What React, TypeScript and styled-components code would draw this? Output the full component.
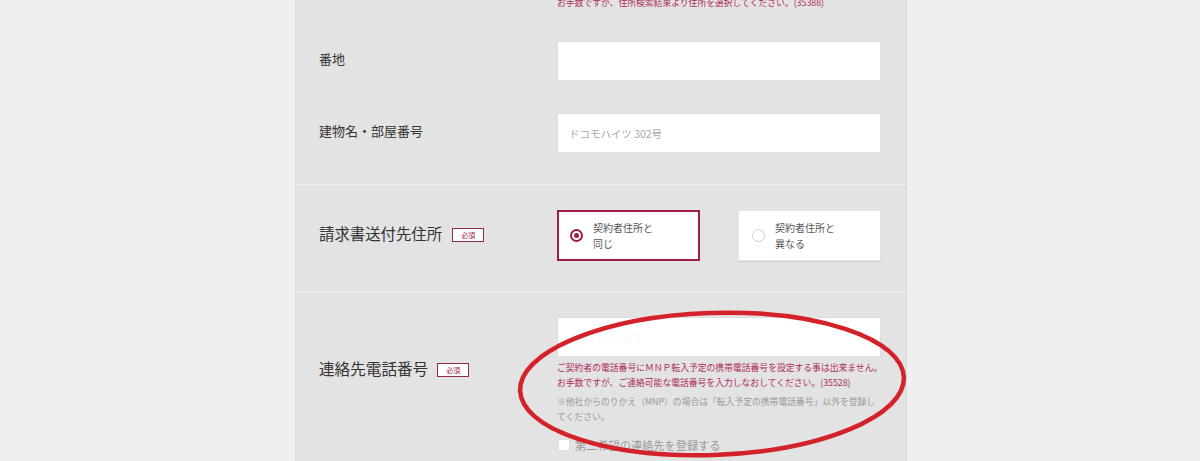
import * as React from "react";
import styled, { createGlobalStyle } from "styled-components";

const maroon = "#9e1c48";
const errorRed = "#ad2c58";
const fontStack = `"Noto Sans CJK JP", "Noto Sans", sans-serif`;

const GlobalStyle = createGlobalStyle`
  html, body {
    margin: 0;
    padding: 0;
    background: #efefef;
    font-family: ${fontStack};
    overflow: hidden;
  }
`;

const Page = styled.div`
  position: relative;
  height: 461px;
  overflow: hidden;
  display: flex;
  justify-content: center;
  padding-left: 2px;
`;

const Panel = styled.div`
  width: 612px;
  box-sizing: border-box;
  background: #e3e3e3;
  border-left: 1px solid #dcdcdc;
  border-right: 1px solid #dcdcdc;
`;

const Section = styled.section<{ $top: number; $bottom: number; $first?: boolean }>`
  padding: ${(p) => p.$top}px 0 ${(p) => p.$bottom}px;
  border-top: ${(p) => (p.$first ? "none" : "1px solid #ececec")};
`;

const Row = styled.div<{ $gap?: number }>`
  display: grid;
  grid-template-columns: 238px 324px;
  padding-left: 23px;
  align-items: center;
  margin-top: ${(p) => p.$gap ?? 0}px;
`;

const Label = styled.div<{ $size: number }>`
  display: flex;
  align-items: center;
  font-size: ${(p) => p.$size}px;
  color: #333;
  white-space: nowrap;
  padding-bottom: 5px;
`;

const Badge = styled.span<{ $gap: number }>`
  margin-left: ${(p) => p.$gap}px;
  margin-top: 4px;
  width: 32px;
  height: 14px;
  box-sizing: border-box;
  border: 1px solid #8e2a4e;
  background: #fff;
  color: ${maroon};
  font-size: 7px;
  line-height: 12px;
  display: flex;
  align-items: center;
  justify-content: center;
`;

const TextInput = styled.input`
  width: 324px;
  height: 40px;
  box-sizing: border-box;
  border: 1px solid #dedede;
  background: #fff;
  padding: 0 11px;
  font-family: ${fontStack};
  font-size: 10.5px;
  color: #333;
  outline: none;
  &::placeholder {
    color: #a9a9a9;
  }
`;

const FaintInput = styled(TextInput)`
  &::placeholder {
    color: #f7f7f7;
  }
`;

const Message = styled.div<{ $tone: "error" | "note"; $gap?: number }>`
  font-size: 8.8px;
  line-height: 15px;
  color: ${(p) => (p.$tone === "error" ? errorRed : "#9a9a9a")};
  margin-top: ${(p) => p.$gap ?? 0}px;
  white-space: nowrap;
`;

const RadioGroup = styled.div`
  display: flex;
  gap: 38px;
`;

const RadioOption = styled.label<{ $checked?: boolean }>`
  width: 143px;
  height: 51px;
  box-sizing: border-box;
  background: #fff;
  display: flex;
  align-items: center;
  border: ${(p) => (p.$checked ? `2px solid ${maroon}` : "1px solid #e6e6e6")};
  box-shadow: ${(p) => (p.$checked ? "none" : "0 1px 1px rgba(0,0,0,0.08)")};
  padding-left: ${(p) => (p.$checked ? 11 : 13)}px;
`;

const RadioDot = styled.span<{ $checked?: boolean }>`
  width: 13px;
  height: 13px;
  box-sizing: border-box;
  border-radius: 50%;
  border: ${(p) => (p.$checked ? `2px solid ${maroon}` : "1px solid #d0d0d0")};
  display: flex;
  align-items: center;
  justify-content: center;
  flex-shrink: 0;
  &::after {
    content: "";
    width: 5px;
    height: 5px;
    border-radius: 50%;
    background: ${maroon};
    display: ${(p) => (p.$checked ? "block" : "none")};
  }
`;

const RadioText = styled.span`
  margin-left: 10px;
  font-size: 10px;
  line-height: 16px;
  color: #555;
`;

const CheckRow = styled.label`
  display: flex;
  align-items: center;
  height: 15px;
`;

const CheckBox = styled.span`
  width: 12px;
  height: 12px;
  box-sizing: border-box;
  background: #fff;
  border: 1px solid #e0e0e0;
  margin-left: 1px;
`;

const CheckText = styled.span`
  margin-left: 5px;
  font-size: 11.2px;
  color: #9a9a9a;
`;

const Annotation = styled.svg`
  position: absolute;
  left: 0;
  top: 0;
  pointer-events: none;
`;

export default function App() {
  return (
    <>
      <GlobalStyle />
      <Page>
        <Panel>
          <Section $top={0} $bottom={31} $first>
            <Row $gap={-5}>
              <span />
              <Message $tone="error">
                お手数ですが、住所検索結果より住所を選択してください。(35388)
              </Message>
            </Row>
            <Row $gap={31}>
              <Label $size={13}>番地</Label>
              <TextInput />
            </Row>
            <Row $gap={32}>
              <Label $size={13}>建物名・部屋番号</Label>
              <TextInput placeholder="ドコモハイツ 302号" />
            </Row>
          </Section>

          <Section $top={25} $bottom={30}>
            <Row>
              <Label $size={15.4}>
                請求書送付先住所<Badge $gap={10}>必須</Badge>
              </Label>
              <RadioGroup>
                <RadioOption $checked>
                  <RadioDot $checked />
                  <RadioText>
                    契約者住所と
                    <br />
                    同じ
                  </RadioText>
                </RadioOption>
                <RadioOption>
                  <RadioDot />
                  <RadioText>
                    契約者住所と
                    <br />
                    異なる
                  </RadioText>
                </RadioOption>
              </RadioGroup>
            </Row>
          </Section>

          <Section $top={25} $bottom={40}>
            <Row>
              <Label $size={15.6}>
                連絡先電話番号<Badge $gap={9}>必須</Badge>
              </Label>
              <div>
                <FaintInput placeholder="090-1234-5678" />
                <Message $tone="error" $gap={3}>
                  ご契約者の電話番号にＭＮＰ転入予定の携帯電話番号を設定する事は出来ません。
                  <br />
                  お手数ですが、ご連絡可能な電話番号を入力しなおしてください。(35528)
                </Message>
                <Message $tone="note" $gap={4}>
                  ※他社からのりかえ（MNP）の場合は「転入予定の携帯電話番号」以外を登録し
                  <br />
                  てください。
                </Message>
              </div>
            </Row>
            <Row $gap={13}>
              <span />
              <CheckRow>
                <CheckBox />
                <CheckText>第二希望の連絡先を登録する</CheckText>
              </CheckRow>
            </Row>
          </Section>
        </Panel>

        <Annotation width="1200" height="461" viewBox="0 0 1200 461">
          <ellipse
            cx="712"
            cy="384"
            rx="192"
            ry="71"
            fill="none"
            stroke="#d3222a"
            strokeWidth="4.5"
            transform="rotate(-2 712 384)"
          />
        </Annotation>
      </Page>
    </>
  );
}
